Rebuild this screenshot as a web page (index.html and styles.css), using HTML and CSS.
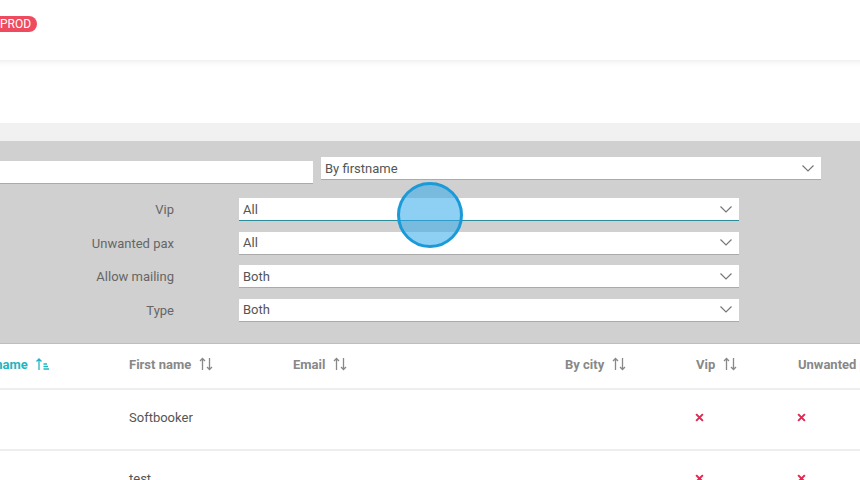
FILE: index.html
```html
<!DOCTYPE html>
<html lang="en">
<head>
  <meta charset="UTF-8" />
  <meta name="viewport" content="width=device-width, initial-scale=1" />
  <title>Pax list</title>
  <link rel="stylesheet" href="styles.css">
</head>
<body>
  <div class="page">
    <header class="topbar">
      <span class="env-badge">PROD</span>
    </header>

    <div class="spacer"></div>
    <div class="band"></div>

    <section class="filters">
      <div class="filter-top">
        <input class="search" type="text" />
        <div class="select select-wide">
          <span>By firstname</span>
          <svg class="chev" viewBox="0 0 12 7"><path d="M0.5 0.5 L6 6 L11.5 0.5" /></svg>
        </div>
      </div>

      <div class="filter-grid">
        <label>Vip</label>
        <div class="select focused">
          <span>All</span>
          <svg class="chev" viewBox="0 0 12 7"><path d="M0.5 0.5 L6 6 L11.5 0.5" /></svg>
        </div>

        <label>Unwanted pax</label>
        <div class="select">
          <span>All</span>
          <svg class="chev" viewBox="0 0 12 7"><path d="M0.5 0.5 L6 6 L11.5 0.5" /></svg>
        </div>

        <label>Allow mailing</label>
        <div class="select">
          <span>Both</span>
          <svg class="chev" viewBox="0 0 12 7"><path d="M0.5 0.5 L6 6 L11.5 0.5" /></svg>
        </div>

        <label>Type</label>
        <div class="select">
          <span>Both</span>
          <svg class="chev" viewBox="0 0 12 7"><path d="M0.5 0.5 L6 6 L11.5 0.5" /></svg>
        </div>
      </div>
    </section>

    <div class="table">
      <div class="row head">
        <div class="cell active">Last name
          <svg class="sort" viewBox="0 0 14 14"><path d="M3 13 V2 M0.5 4.5 L3 2 L5.5 4.5 M7.5 7 H11 M7.5 9.5 H12 M7.5 12 H13" /></svg>
        </div>
        <div class="cell">First name
          <svg class="sort" viewBox="0 0 14 14"><path d="M3.5 13 V1.5 M1 4 L3.5 1.5 L6 4 M10.5 1 V12.5 M8 10 L10.5 12.5 L13 10" /></svg>
        </div>
        <div class="cell">Email
          <svg class="sort" viewBox="0 0 14 14"><path d="M3.5 13 V1.5 M1 4 L3.5 1.5 L6 4 M10.5 1 V12.5 M8 10 L10.5 12.5 L13 10" /></svg>
        </div>
        <div class="cell">By city
          <svg class="sort" viewBox="0 0 14 14"><path d="M3.5 13 V1.5 M1 4 L3.5 1.5 L6 4 M10.5 1 V12.5 M8 10 L10.5 12.5 L13 10" /></svg>
        </div>
        <div class="cell">Vip
          <svg class="sort" viewBox="0 0 14 14"><path d="M3.5 13 V1.5 M1 4 L3.5 1.5 L6 4 M10.5 1 V12.5 M8 10 L10.5 12.5 L13 10" /></svg>
        </div>
        <div class="cell">Unwanted pax</div>
      </div>

      <div class="row">
        <div class="cell"></div>
        <div class="cell">Softbooker</div>
        <div class="cell"></div>
        <div class="cell"></div>
        <div class="cell"><svg class="no" viewBox="0 0 8 8"><path d="M1 1 L7 7 M7 1 L1 7" /></svg></div>
        <div class="cell"><svg class="no" viewBox="0 0 8 8"><path d="M1 1 L7 7 M7 1 L1 7" /></svg></div>
      </div>

      <div class="row">
        <div class="cell"></div>
        <div class="cell">test</div>
        <div class="cell"></div>
        <div class="cell"></div>
        <div class="cell"><svg class="no" viewBox="0 0 8 8"><path d="M1 1 L7 7 M7 1 L1 7" /></svg></div>
        <div class="cell"><svg class="no" viewBox="0 0 8 8"><path d="M1 1 L7 7 M7 1 L1 7" /></svg></div>
      </div>
    </div>
  </div>

  <div class="touch"></div>
</body>
</html>
```

FILE: styles.css
```css
* {
  box-sizing: border-box;
}
html, body {
  margin: 0;
  height: 100%;
  overflow: hidden;
}
body {
  font-family: Roboto, 'Liberation Sans', sans-serif;
  background: #fff;
  color: #555;
}
/* страница прокручена вбок, левый край не виден */
.page {
  width: 1100px;
  margin-left: -200px;
}
.topbar {
  height: 60px;
  background: #fff;
  display: flex;
  align-items: flex-start;
  padding-top: 16px;
  padding-left: 193px;
  box-shadow: 0 2px 6px rgba(0, 0, 0, 0.07);
  position: relative;
}
.env-badge {
  display: block;
  height: 16px;
  line-height: 16px;
  padding: 0 6px 0 7px;
  border-radius: 8px;
  background: #ee4b5e;
  color: #fff;
  font-size: 12px;
}
.spacer {
  height: 63px;
}
.band {
  height: 18px;
  background: #f1f1f1;
}
.filters {
  background: #d0d0d0;
  padding: 16px 0 21px;
  border-bottom: 1px solid #bdbdbd;
}
.filter-top {
  display: flex;
  align-items: flex-start;
  gap: 8px;
  padding-left: 13px;
}
.search {
  width: 500px;
  height: 23px;
  margin-top: 4px;
  border: none;
  border-bottom: 1px solid #aaa;
  background: #fff;
}
.select {
  width: 500px;
  height: 23px;
  background: #fff;
  border-bottom: 1px solid #aaa;
  display: flex;
  align-items: center;
  justify-content: space-between;
  padding: 0 7px 0 4px;
  font-size: 13px;
  color: #555;
}
.select.focused {
  border-bottom-color: #2a8d99;
}
.chev {
  width: 12px;
  height: 7px;
  fill: none;
  stroke: #777;
  stroke-width: 1.2;
}
.filter-grid {
  display: grid;
  grid-template-columns: 374px 500px;
  column-gap: 65px;
  row-gap: 10.6px;
  margin-top: 14px;
  align-items: center;
}
.filter-grid label {
  text-align: right;
  font-size: 13px;
  color: #666;
}
.row {
  display: grid;
  grid-template-columns: 329px 164px 272px 131px 102px 1fr;
  height: 61px;
  padding-bottom: 3px;
  align-items: center;
  border-bottom: 2px solid #eee;
  font-size: 13px;
}
.row.head {
  height: 46px;
  font-weight: 700;
  color: #888;
}
.row .cell:first-child {
  padding-left: 167px;
}
.cell {
  display: flex;
  align-items: center;
  gap: 8px;
  white-space: nowrap;
}
.cell.active {
  color: #22b5c0;
}
.sort {
  width: 14px;
  height: 14px;
  fill: none;
  stroke: currentColor;
  stroke-width: 1.3;
}
.no {
  width: 9px;
  height: 9px;
  margin-left: -1px;
  fill: none;
  stroke: #df2a52;
  stroke-width: 1.8;
}
/* след касания поверх страницы */
.touch {
  position: absolute;
  left: 397px;
  top: 182px;
  width: 66px;
  height: 66px;
  border-radius: 50%;
  border: 3px solid #1b9ad8;
  background: rgba(50, 170, 235, 0.55);
}
```
